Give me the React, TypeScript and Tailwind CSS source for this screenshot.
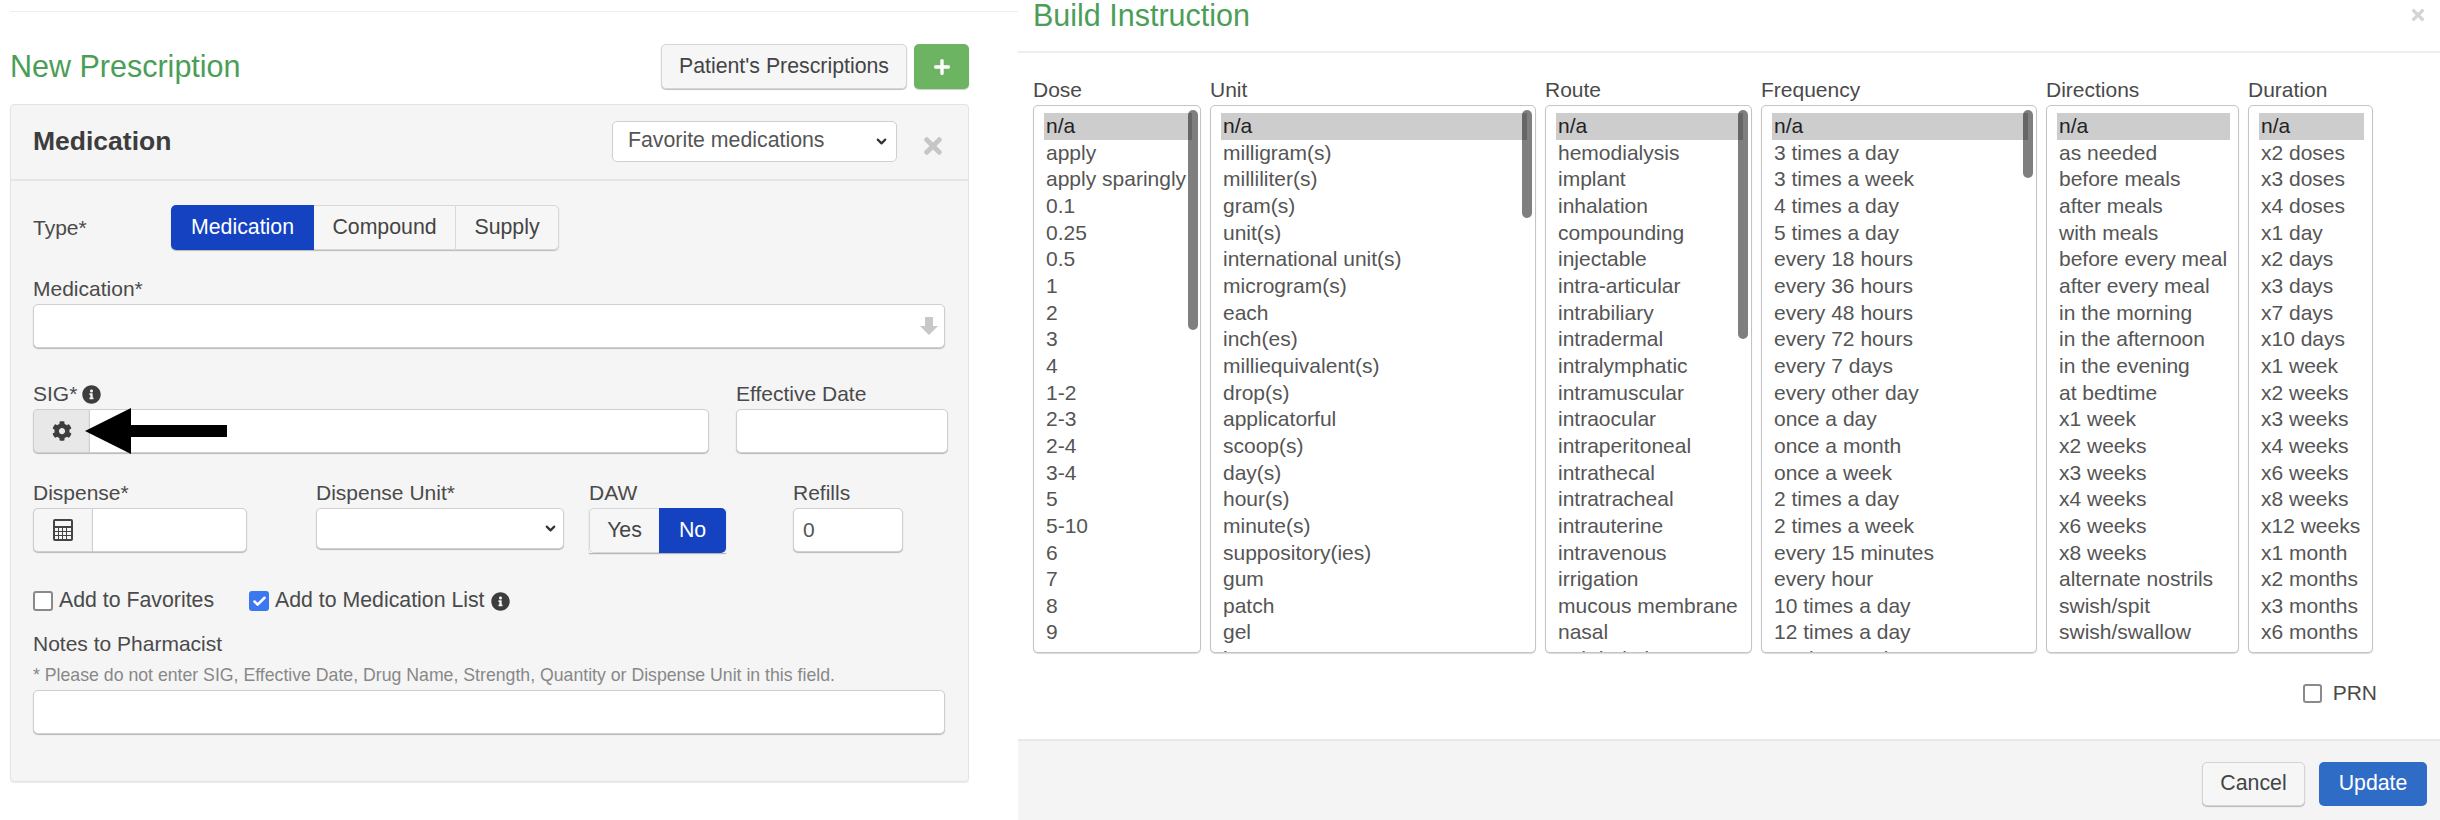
import type { ReactNode } from 'react';
import { ChevronDown, Check } from 'lucide-react';
import { FaCog, FaInfoCircle, FaPlus, FaTimes } from 'react-icons/fa';

const inputClass =
  'h-[44px] rounded-[5px] border border-[#cfcfcf] bg-white px-[9px] text-[21px] text-[#555] shadow-[0_1px_1px_rgba(0,0,0,0.25)] outline-none';

const lists = [
  {
    label: 'Dose',
    width: 'w-[168px]',
    thumb: 'h-[220px] right-[2px]',
    options: ['n/a', 'apply', 'apply sparingly', '0.1', '0.25', '0.5', '1', '2', '3', '4', '1-2', '2-3', '2-4', '3-4', '5', '5-10', '6', '7', '8', '9', '10'],
  },
  {
    label: 'Unit',
    width: 'w-[326px]',
    thumb: 'h-[108px] right-[3px]',
    options: ['n/a', 'milligram(s)', 'milliliter(s)', 'gram(s)', 'unit(s)', 'international unit(s)', 'microgram(s)', 'each', 'inch(es)', 'milliequivalent(s)', 'drop(s)', 'applicatorful', 'scoop(s)', 'day(s)', 'hour(s)', 'minute(s)', 'suppository(ies)', 'gum', 'patch', 'gel', 'lozenge'],
  },
  {
    label: 'Route',
    width: 'w-[207px]',
    thumb: 'h-[229px] right-[3px]',
    options: ['n/a', 'hemodialysis', 'implant', 'inhalation', 'compounding', 'injectable', 'intra-articular', 'intrabiliary', 'intradermal', 'intralymphatic', 'intramuscular', 'intraocular', 'intraperitoneal', 'intrathecal', 'intratracheal', 'intrauterine', 'intravenous', 'irrigation', 'mucous membrane', 'nasal', 'ophthalmic'],
  },
  {
    label: 'Frequency',
    width: 'w-[276px]',
    thumb: 'h-[68px] right-[3px]',
    options: ['n/a', '3 times a day', '3 times a week', '4 times a day', '5 times a day', 'every 18 hours', 'every 36 hours', 'every 48 hours', 'every 72 hours', 'every 7 days', 'every other day', 'once a day', 'once a month', 'once a week', '2 times a day', '2 times a week', 'every 15 minutes', 'every hour', '10 times a day', '12 times a day', '16 times a day'],
  },
  {
    label: 'Directions',
    width: 'w-[193px]',
    options: ['n/a', 'as needed', 'before meals', 'after meals', 'with meals', 'before every meal', 'after every meal', 'in the morning', 'in the afternoon', 'in the evening', 'at bedtime', 'x1 week', 'x2 weeks', 'x3 weeks', 'x4 weeks', 'x6 weeks', 'x8 weeks', 'alternate nostrils', 'swish/spit', 'swish/swallow'],
  },
  {
    label: 'Duration',
    width: 'w-[125px]',
    options: ['n/a', 'x2 doses', 'x3 doses', 'x4 doses', 'x1 day', 'x2 days', 'x3 days', 'x7 days', 'x10 days', 'x1 week', 'x2 weeks', 'x3 weeks', 'x4 weeks', 'x6 weeks', 'x8 weeks', 'x12 weeks', 'x1 month', 'x2 months', 'x3 months', 'x6 months'],
  },
];

function Label({ children }: { children: ReactNode }) {
  return <div className="mb-[3px] flex h-[24px] items-center gap-[5px] whitespace-nowrap text-[21px] text-[#4a4a4a]">{children}</div>;
}

function Box({ checked = false }: { checked?: boolean }) {
  return checked ? (
    <span className="flex h-[20px] w-[20px] items-center justify-center rounded-[3px] bg-[#3b78f0]">
      <Check size={15} strokeWidth={4} className="text-white" />
    </span>
  ) : (
    <span className="h-[20px] w-[20px] rounded-[3px] border-2 border-[#8a8a8a] bg-white" />
  );
}

function CalculatorIcon() {
  return (
    <svg width="20" height="22" viewBox="0 0 20 22" className="text-[#444]">
      <path
        fill="currentColor"
        fillRule="evenodd"
        d="M2 0h16a2 2 0 0 1 2 2v18a2 2 0 0 1-2 2H2a2 2 0 0 1-2-2V2a2 2 0 0 1 2-2zM2 2v5h16V2zM2 9v3h3V9zm4 0v3h3V9zm4 0v3h3V9zm4 0v3h4V9zM2 13v3h3v-3zm4 0v3h3v-3zm4 0v3h3v-3zm4 0v3h4v-3zM2 17v3h3v-3zm4 0v3h3v-3zm4 0v3h3v-3zm4 0v3h4v-3z"
      />
    </svg>
  );
}

function PrescriptionForm() {
  return (
    <div className="w-[1018px] shrink-0 pl-[10px] pt-[11px]">
      <div className="h-[1px] bg-[#eeeeee]" />
      <div className="mt-[32px] flex h-[45px] w-[959px] items-center justify-between">
        <h2 className="text-[30.5px] text-[#4b9e57]">New Prescription</h2>
        <div className="flex gap-[7px]">
          <button className="h-[45px] w-[246px] rounded-[5px] border border-[#d4d4d4] bg-[#f6f6f6] text-[21.3px] text-[#444] shadow-[0_1px_1px_rgba(0,0,0,0.25)]">
            Patient's Prescriptions
          </button>
          <button className="flex h-[45px] w-[55px] items-center justify-center rounded-[5px] bg-[#6cb462] text-white shadow-[0_1px_1px_rgba(0,0,0,0.2)]">
            <FaPlus size={18} />
          </button>
        </div>
      </div>

      <div className="mt-[15px] h-[678px] w-[959px] rounded-[4px] border border-[#e3e3e3] bg-[#f5f5f5] shadow-[0_1px_1px_rgba(0,0,0,0.08)]">
        <div className="flex h-[76px] items-center border-b-2 border-[#e6e6e6] pl-[22px]">
          <h3 className="text-[26.5px] font-bold text-[#3d3d3d]">Medication</h3>
          <div className="ml-auto flex h-[41px] w-[285px] -translate-y-[1px] items-center justify-between rounded-[5px] border border-[#cfcfcf] bg-white pl-[15px] pr-[7px] text-[21.3px] text-[#555]">
            Favorite medications
            <ChevronDown size={15} strokeWidth={3.5} className="text-[#333]" />
          </div>
          <FaTimes size={26} className="ml-[23px] mr-[22px] translate-y-[4px] text-[#c6c6c6]" />
        </div>

        <div className="pl-[22px]">
          <div className="mt-[24px] flex h-[45px] items-center">
            <span className="w-[138px] text-[21px] text-[#4a4a4a]">Type*</span>
            <div className="flex h-[45px] rounded-[5px] text-[21.3px] shadow-[0_1px_1px_rgba(0,0,0,0.25)]">
              <button className="w-[143px] rounded-l-[5px] bg-[#1542c1] text-white">Medication</button>
              <button className="w-[141px] border-y border-[#d8d8d8] bg-[#f6f6f6] text-[#444]">Compound</button>
              <button className="w-[104px] rounded-r-[5px] border border-[#d8d8d8] bg-[#f6f6f6] text-[#444]">Supply</button>
            </div>
          </div>

          <div className="mt-[27px] w-[912px]">
            <Label>Medication*</Label>
            <div className={`${inputClass} flex items-center justify-end pr-[6px]`}>
              <svg width="18" height="18" viewBox="0 0 18 18" className="text-[#c8c8c8]">
                <polygon points="5,0 13,0 13,9 18,9 9,18 0,9 5,9" fill="currentColor" />
              </svg>
            </div>
          </div>

          <div className="mt-[34px] flex">
            <div className="w-[703px]">
              <Label>
                SIG* <FaInfoCircle size={19} className="text-[#3d3d3d]" />
              </Label>
              <div className="relative flex w-[676px]">
                <span className="flex h-[44px] w-[56px] items-center justify-center rounded-l-[5px] border border-r-0 border-[#cfcfcf] bg-[#e8e8e8] text-[#3d3d3d] shadow-[0_1px_1px_rgba(0,0,0,0.25)]">
                  <FaCog size={20} />
                </span>
                <input className={`${inputClass} min-w-0 flex-1 rounded-l-none`} />
                <svg width="142" height="46" viewBox="0 0 142 46" className="absolute -top-[1px] left-[52px]">
                  <polygon points="0,23 46,0 46,17 142,17 142,29 46,29 46,46" fill="#000" />
                </svg>
              </div>
            </div>
            <div className="w-[212px]">
              <Label>Effective Date</Label>
              <input className={`${inputClass} w-[212px]`} />
            </div>
          </div>

          <div className="mt-[28px] flex">
            <div className="w-[283px]">
              <Label>Dispense*</Label>
              <div className="flex w-[214px]">
                <span className="flex h-[44px] w-[59px] items-center justify-center rounded-l-[5px] border border-r-0 border-[#cfcfcf] bg-[#f6f6f6] shadow-[0_1px_1px_rgba(0,0,0,0.25)]">
                  <CalculatorIcon />
                </span>
                <input className={`${inputClass} min-w-0 flex-1 rounded-l-none`} />
              </div>
            </div>
            <div className="w-[273px]">
              <Label>Dispense Unit*</Label>
              <div className="flex h-[41px] w-[248px] items-center justify-end rounded-[5px] border border-[#cfcfcf] bg-white pr-[5px] shadow-[0_1px_1px_rgba(0,0,0,0.25)]">
                <ChevronDown size={15} strokeWidth={3.5} className="text-[#333]" />
              </div>
            </div>
            <div className="w-[204px]">
              <Label>DAW</Label>
              <div className="flex h-[45px] w-[137px] text-[21.3px] shadow-[0_1px_1px_rgba(0,0,0,0.25)]">
                <button className="w-[70px] rounded-l-[5px] border border-r-0 border-[#d8d8d8] bg-[#f6f6f6] text-[#444]">Yes</button>
                <button className="w-[67px] rounded-r-[5px] bg-[#1542c1] text-white">No</button>
              </div>
            </div>
            <div className="w-[110px]">
              <Label>Refills</Label>
              <input defaultValue="0" className={`${inputClass} w-[110px]`} />
            </div>
          </div>

          <div className="mt-[36px] flex h-[24px] items-center text-[21.3px] text-[#4a4a4a]">
            <Box />
            <span className="ml-[6px] w-[190px]">Add to Favorites</span>
            <Box checked />
            <span className="ml-[6px]">Add to Medication List</span>
            <FaInfoCircle size={19} className="ml-[6px] text-[#3d3d3d]" />
          </div>

          <div className="mt-[19px] w-[912px]">
            <div className="flex h-[24px] items-center text-[21px] text-[#4a4a4a]">Notes to Pharmacist</div>
            <p className="mt-[9px] flex h-[20px] items-center whitespace-nowrap text-[17.7px] text-[#888]">
              * Please do not enter SIG, Effective Date, Drug Name, Strength, Quantity or Dispense Unit in this field.
            </p>
            <input className={`${inputClass} mt-[5px] w-full`} />
          </div>
        </div>
      </div>
    </div>
  );
}

function OptionList({ label, width, thumb, options }: { label: string; width: string; thumb?: string; options: string[] }) {
  return (
    <div className={width}>
      <Label>{label}</Label>
      <div className="relative h-[548px] overflow-hidden rounded-[5px] border border-[#c4c4c4] bg-white pl-[10px] pr-[8px] pt-[7px] shadow-[0_1px_1px_rgba(0,0,0,0.15)]">
        {options.map((option, i) => (
          <div
            key={option}
            className={`h-[26.67px] overflow-hidden whitespace-nowrap px-[2px] text-[21px] leading-[25px] ${
              i === 0 ? 'bg-[#cdcdcd] text-[#222]' : 'text-[#555]'
            }`}
          >
            {option}
          </div>
        ))}
        {thumb && <div className={`absolute top-[4px] w-[10px] rounded-full bg-black/50 ${thumb}`} />}
      </div>
    </div>
  );
}

function BuildInstruction() {
  return (
    <div className="flex h-[820px] min-w-0 flex-1 flex-col">
      <div className="flex h-[53px] items-start justify-between border-b-2 border-[#eeeeee] pl-[15px] pr-[13px]">
        <h2 className="h-[30px] text-[30.5px] leading-[30px] text-[#4b9e57]">Build Instruction</h2>
        <FaTimes size={18} className="mt-[6px] text-[#d4d4d4]" />
      </div>

      <div className="flex gap-[9px] pl-[15px] pt-[25px]">
        {lists.map((list) => (
          <OptionList key={list.label} {...list} />
        ))}
      </div>

      <div className="mt-[28px] flex h-[24px] items-center justify-end gap-[11px] pr-[63px] text-[21px] text-[#4a4a4a]">
        <span className="h-[19px] w-[19px] rounded-[3px] border-2 border-[#8a8a8a] bg-white" />
        PRN
      </div>

      <div className="mt-[34px] flex flex-1 items-start justify-end gap-[14px] border-t-2 border-[#e8e8e8] bg-[#f4f4f4] pr-[13px] pt-[21px]">
        <button className="h-[44px] w-[103px] rounded-[5px] border border-[#d4d4d4] bg-[#f6f6f6] text-[21.3px] text-[#444] shadow-[0_1px_1px_rgba(0,0,0,0.25)]">
          Cancel
        </button>
        <button className="h-[44px] w-[108px] rounded-[5px] bg-[#2f6cc6] text-[21.3px] text-white">Update</button>
      </div>
    </div>
  );
}

export default function App() {
  return (
    <div className="flex h-[820px] w-[2440px] overflow-hidden bg-white font-['Liberation_Sans',Arial,sans-serif]">
      <PrescriptionForm />
      <BuildInstruction />
    </div>
  );
}
